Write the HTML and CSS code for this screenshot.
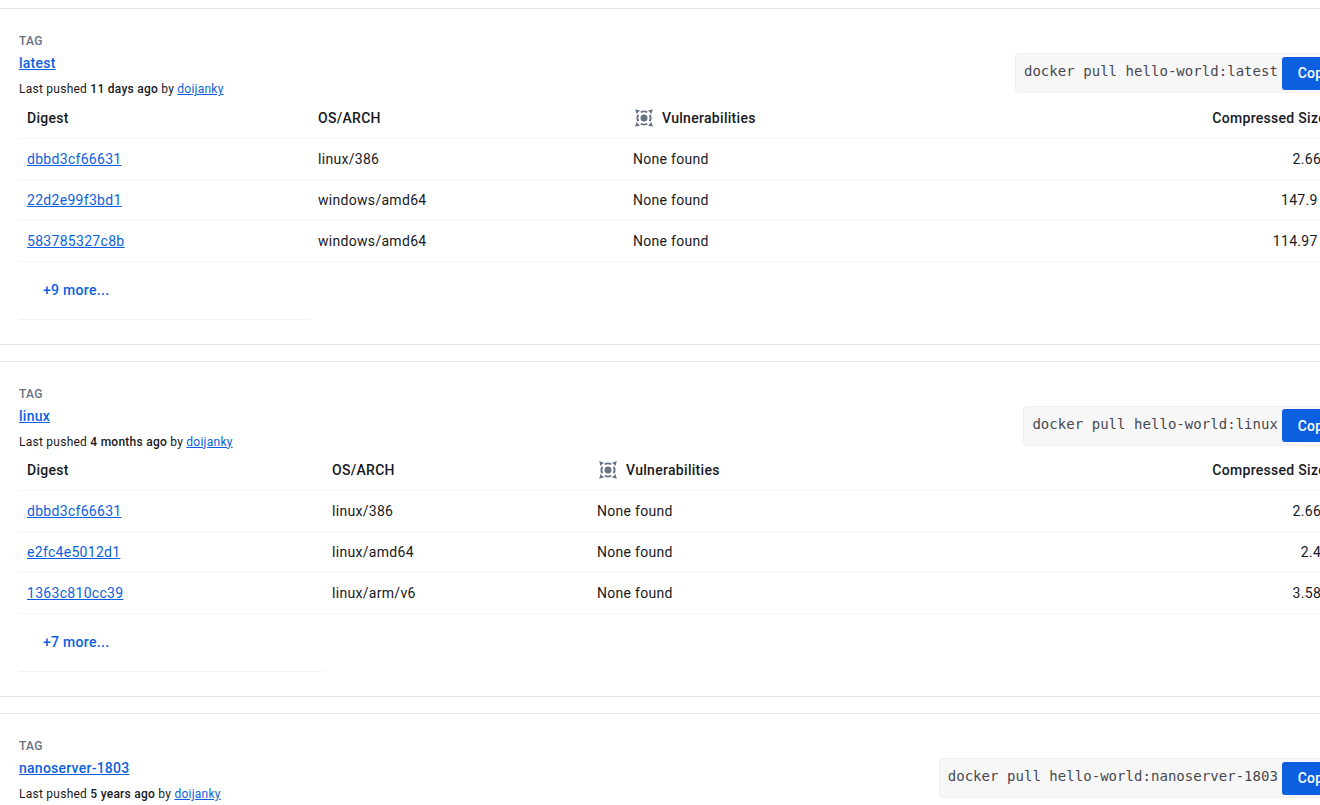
FILE: index.html
```html
<!DOCTYPE html>
<html lang="en">
<head>
<meta charset="utf-8">
<title>hello-world tags</title>
<link rel="stylesheet" href="styles.css">
</head>
<body>
<main class="page">
  <section class="tag">
    <div class="tag-head">
      <div class="tag-info">
        <div class="label">TAG</div>
        <a class="tag-name" href="#">latest</a>
        <div class="pushed">Last pushed <b>11 days ago</b> by <a href="#">doijanky</a></div>
      </div>
      <div class="pull"><code>docker pull hello-world:latest</code><button class="copy">Copy</button></div>
    </div>
    <table class="images latest">
      <thead><tr><th class="c1">Digest</th><th class="c2">OS/ARCH</th><th class="c3"><span class="vuln"><svg class="scout" viewBox="0 0 18 18"><path d="M0.2 0.2 L5 1.5 L1.5 5 Z M17.8 0.2 L13 1.5 L16.5 5 Z M0.2 17.8 L1.5 13 L5 16.5 Z M17.8 17.8 L16.5 13 L13 16.5 Z"/><path class="ring" d="M5.7 3.28 A6.6 6.6 0 0 1 12.3 3.28 M14.72 5.7 A6.6 6.6 0 0 1 14.72 12.3 M12.3 14.72 A6.6 6.6 0 0 1 5.7 14.72 M3.28 12.3 A6.6 6.6 0 0 1 3.28 5.7"/><circle cx="9" cy="9" r="3.5"/></svg>Vulnerabilities</span></th><th class="size">Compressed Size</th></tr></thead>
      <tbody>
        <tr><td><a href="#">dbbd3cf66631</a></td><td>linux/386</td><td>None found</td><td class="size">2.66 KB</td></tr>
        <tr><td><a href="#">22d2e99f3bd1</a></td><td>windows/amd64</td><td>None found</td><td class="size">147.9 MB</td></tr>
        <tr><td><a href="#">583785327c8b</a></td><td>windows/amd64</td><td>None found</td><td class="size">114.97 MB</td></tr>
        <tr class="more"><td><a href="#">+9 more...</a></td><td></td><td></td><td></td></tr>
      </tbody>
    </table>
  </section>
  <section class="tag">
    <div class="tag-head">
      <div class="tag-info">
        <div class="label">TAG</div>
        <a class="tag-name" href="#">linux</a>
        <div class="pushed">Last pushed <b>4 months ago</b> by <a href="#">doijanky</a></div>
      </div>
      <div class="pull"><code>docker pull hello-world:linux</code><button class="copy">Copy</button></div>
    </div>
    <table class="images linux">
      <thead><tr><th class="c1">Digest</th><th class="c2">OS/ARCH</th><th class="c3"><span class="vuln"><svg class="scout" viewBox="0 0 18 18"><path d="M0.2 0.2 L5 1.5 L1.5 5 Z M17.8 0.2 L13 1.5 L16.5 5 Z M0.2 17.8 L1.5 13 L5 16.5 Z M17.8 17.8 L16.5 13 L13 16.5 Z"/><path class="ring" d="M5.7 3.28 A6.6 6.6 0 0 1 12.3 3.28 M14.72 5.7 A6.6 6.6 0 0 1 14.72 12.3 M12.3 14.72 A6.6 6.6 0 0 1 5.7 14.72 M3.28 12.3 A6.6 6.6 0 0 1 3.28 5.7"/><circle cx="9" cy="9" r="3.5"/></svg>Vulnerabilities</span></th><th class="size">Compressed Size</th></tr></thead>
      <tbody>
        <tr><td><a href="#">dbbd3cf66631</a></td><td>linux/386</td><td>None found</td><td class="size">2.66 KB</td></tr>
        <tr><td><a href="#">e2fc4e5012d1</a></td><td>linux/amd64</td><td>None found</td><td class="size">2.4 KB</td></tr>
        <tr><td><a href="#">1363c810cc39</a></td><td>linux/arm/v6</td><td>None found</td><td class="size">3.58 KB</td></tr>
        <tr class="more"><td><a href="#">+7 more...</a></td><td></td><td></td><td></td></tr>
      </tbody>
    </table>
  </section>
  <section class="tag">
    <div class="tag-head">
      <div class="tag-info">
        <div class="label">TAG</div>
        <a class="tag-name" href="#">nanoserver-1803</a>
        <div class="pushed">Last pushed <b>5 years ago</b> by <a href="#">doijanky</a></div>
      </div>
      <div class="pull"><code>docker pull hello-world:nanoserver-1803</code><button class="copy">Copy</button></div>
    </div>
  </section>
</main>
</body>
</html>
```
FILE: styles.css
```css
html, body {
  margin: 0;
  height: 805px;
  overflow: hidden;
  background: #fff;
}
body {
  font-family: Roboto, "Noto Sans", sans-serif;
  color: #17191e;
  font-size: 14px;
}
a { color: #0b5fe0; }
.page {
  width: 1369px;
  padding-top: 8.4px;
}
.tag {
  border-top: 1px solid #e1e2e6;
  border-bottom: 1px solid #e1e2e6;
  height: 310.4px;
  margin-bottom: 16px;
  padding: 24px 19px 0;
}
.tag-head {
  display: flex;
  justify-content: space-between;
  align-items: flex-end;
}
.label {
  font-size: 12px;
  line-height: 16px;
  font-weight: 500;
  letter-spacing: 0.3px;
  color: #677285;
}
.tag-name {
  display: block;
  width: max-content;
  margin-top: 4px;
  font-size: 14px;
  line-height: 20px;
  font-weight: 500;
  letter-spacing: 0.25px;
}
.pushed {
  margin-top: 8px;
  font-size: 12px;
  line-height: 16px;
  letter-spacing: 0.25px;
}
.pushed b { font-weight: 500; }
.pull {
  display: flex;
  align-items: center;
  box-sizing: border-box;
  height: 40px;
  background: #f7f7f8;
  border: 1px solid #f0f0f2;
  border-radius: 4px;
  margin-right: 3px;
  margin-bottom: 4px;
  padding-left: 8px;
}
.pull code {
  font-family: "DejaVu Sans Mono", "Liberation Mono", monospace;
  font-size: 14px;
  letter-spacing: 0.04px;
  color: #47494f;
  margin-right: 4px;
  padding-bottom: 4px;
}
.copy {
  width: 64px;
  height: 33px;
  border: 0;
  border-radius: 3px;
  background: #0b5fe0;
  color: #fff;
  font: 500 14px Roboto, sans-serif;
  letter-spacing: 0.2px;
}
.images {
  border-collapse: collapse;
  table-layout: fixed;
  width: 1331px;
  margin-top: 0.3px;
}
.images th, .images td {
  text-align: left;
  padding: 0 8px;
  height: 40px;
  border-bottom: 1px solid #f4f4f6;
  letter-spacing: 0.3px;
  font-size: 14px;
}
.images th { font-weight: 500; }
.images .size { text-align: right; padding-right: 7px; }
.images th.size { padding-right: 24px; }
.latest .c1 { width: 275px; }
.latest .c2 { width: 299px; }
.latest .c3 { width: 300px; }
.linux .c1 { width: 289px; }
.linux .c2 { width: 249px; }
.linux .c3 { width: 300px; }
.vuln { display: flex; align-items: center; gap: 9px; }
.scout { width: 18px; height: 18px; margin-left: 2px; fill: #677285; }
.scout .ring { fill: none; stroke: #677285; stroke-width: 1.8; }
.more td { height: 56px; padding-bottom: 1px; border-bottom: 0; }
.more td:first-child { border-bottom: 1px solid #f4f4f6; padding-left: 24px; }
.more a { font-weight: 500; text-decoration: none; }
```
